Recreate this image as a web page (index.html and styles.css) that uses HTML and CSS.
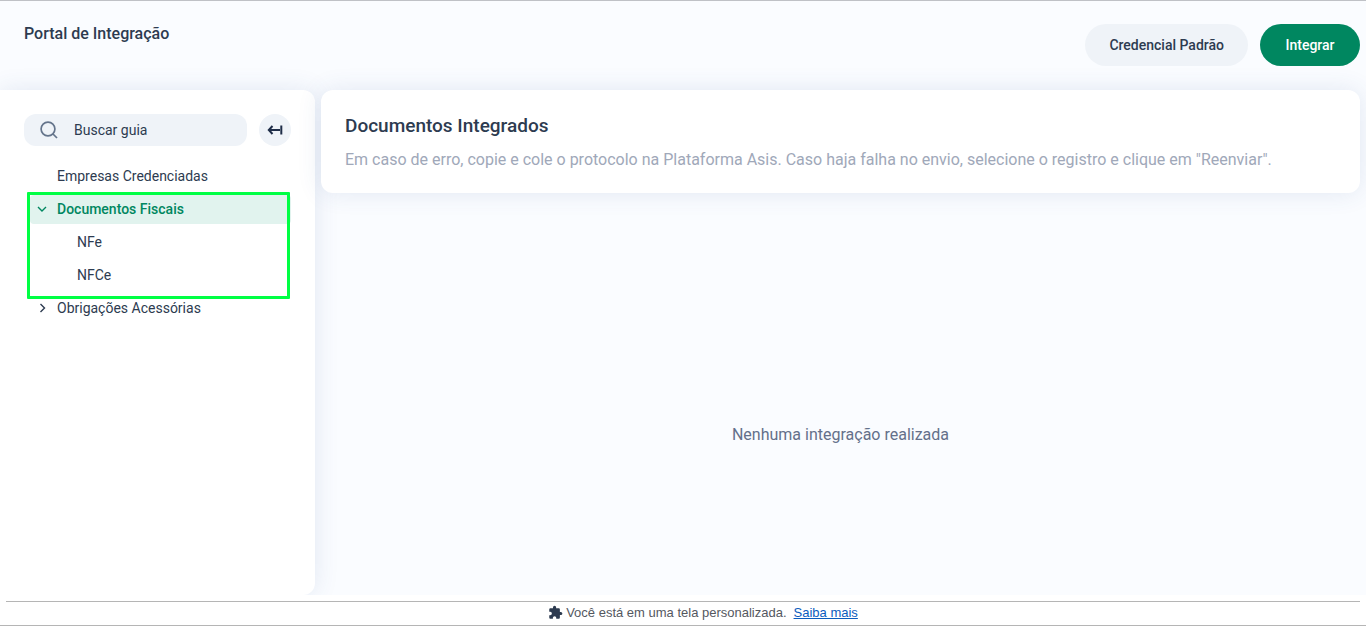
FILE: index.html
```html
<!DOCTYPE html>
<html lang="pt-BR">
<head>
    <meta charset="UTF-8">
    <title>Portal de Integração</title>
    <link rel="stylesheet" href="styles.css">
</head>
<body>
    <div class="portal">
        <header class="topbar">
            <h1>Portal de Integração</h1>
            <div class="actions">
                <button type="button" class="btn">Credencial Padrão</button>
                <button type="button" class="btn btn-primary">Integrar</button>
            </div>
        </header>

        <div class="content">
            <aside class="sidebar">
                <div class="search-row">
                    <label class="search">
                        <svg width="18" height="18" viewBox="0 0 18 18" fill="none" stroke="#64748b" stroke-width="1.7">
                            <circle cx="8" cy="8" r="6.9"/>
                            <path d="M13 13l4 4"/>
                        </svg>
                        <input type="text" placeholder="Buscar guia" aria-label="Buscar guia">
                    </label>
                    <button type="button" class="collapse" aria-label="Recolher menu">
                        <svg width="16" height="12" viewBox="0 0 16 12" fill="none" stroke="#1f2d48" stroke-width="2">
                            <path d="M5.500 2L1.800 6l3.700 4M2 6h11M14.300 1.500v9"/>
                        </svg>
                    </button>
                </div>

                <nav class="menu">
                    <a href="#">Empresas Credenciadas</a>
                    <div class="group">
                        <a href="#" class="active">
                            <svg class="chevron" width="10" height="10" viewBox="0 0 10 10" fill="none" stroke="currentColor" stroke-width="1.400"><path d="M1 3l4 4 4-4"/></svg>
                            Documentos Fiscais
                        </a>
                        <a href="#" class="sub">NFe</a>
                        <a href="#" class="sub">NFCe</a>
                    </div>
                    <a href="#">
                        <svg class="chevron" width="10" height="10" viewBox="0 0 10 10" fill="none" stroke="currentColor" stroke-width="1.400"><path d="M3.500 1l4 4-4 4"/></svg>
                        Obrigações Acessórias
                    </a>
                </nav>
            </aside>

            <main>
                <section class="card">
                    <h2>Documentos Integrados</h2>
                    <p>Em caso de erro, copie e cole o protocolo na Plataforma Asis. Caso haja falha no envio, selecione o registro e clique em "Reenviar".</p>
                </section>
                <div class="empty">Nenhuma integração realizada</div>
            </main>
        </div>
    </div>

    <footer>
        <div class="notice">
            <svg width="15" height="15" viewBox="0 0 24 24" fill="#2d3b50"><path d="M20.500 11H19V7c0-1.100-.9-2-2-2h-4V3.500a2.500 2.500 0 0 0-5 0V5H4c-1.100 0-2 .9-2 2v3.800h1.500a2.700 2.700 0 0 1 0 5.400H2V20c0 1.100.9 2 2 2h3.800v-1.500a2.700 2.700 0 0 1 5.400 0V22H17c1.100 0 2-.9 2-2v-4h1.500a2.500 2.500 0 0 0 0-5z"/></svg>
            <span>Você está em uma tela personalizada.</span>
            <a href="#">Saiba mais</a>
        </div>
    </footer>
</body>
</html>
```
FILE: styles.css
```css
* {
    box-sizing: border-box;
}

body {
    margin: 0;
    min-height: 100vh;
    display: flex;
    flex-direction: column;
    font-family: Roboto, Arial, sans-serif;
    font-size: 14px;
    color: #2d3b50;
    background: white;
    border-top: 1px solid #bfc1c6;
    border-bottom: 1px solid #b5b5b5;
}

.portal {
    flex: 1;
    display: flex;
    flex-direction: column;
    background: #fafcff;
}

.topbar {
    display: flex;
    justify-content: space-between;
    align-items: flex-start;
    padding: 23px 6px 24px 24px;
}

h1 {
    margin: 0;
    font-size: 16px;
    line-height: 20px;
    font-weight: 500;
}

.actions {
    display: flex;
    gap: 12px;
}

.btn {
    height: 42px;
    padding: 0 24px;
    border: none;
    border-radius: 21px;
    background: #eff3f8;
    color: #2d3b50;
    font-family: inherit;
    font-size: 14px;
    font-weight: 500;
    cursor: pointer;
}

.btn-primary {
    width: 100px;
    background: #008760;
    color: white;
}

.content {
    flex: 1;
    display: flex;
    gap: 6px;
}

.sidebar {
    width: 315px;
    padding: 24px 24px 0;
    background: white;
    border-radius: 0 12px 12px 0;
    box-shadow: 0 0 24px rgba(50, 80, 150, 0.12);
}

.search-row {
    display: flex;
    gap: 12px;
}

.search {
    flex: 1;
    display: flex;
    align-items: center;
    gap: 16px;
    height: 32px;
    padding: 0 16px;
    border-radius: 12px;
    background: #eff3f8;
}

.search svg {
    flex-shrink: 0;
}

.search input {
    width: 100%;
    padding: 0;
    border: none;
    outline: none;
    background: none;
    font-family: inherit;
    font-size: 14px;
}

.search input::placeholder {
    color: #2d3b50;
}

.collapse {
    display: flex;
    align-items: center;
    justify-content: center;
    width: 32px;
    height: 32px;
    padding: 0;
    border: none;
    border-radius: 50%;
    background: #eff3f8;
    cursor: pointer;
}

.menu {
    display: flex;
    flex-direction: column;
    gap: 4px;
    margin: 16px 0 0 6px;
}

.menu a {
    position: relative;
    padding-left: 27px;
    line-height: 29px;
    border-radius: 4px;
    color: #2d3b50;
    text-decoration: none;
}

.menu .sub {
    padding-left: 47px;
}

.menu .active {
    background: #e1f3ee;
    color: #008760;
    font-weight: 500;
}

.chevron {
    position: absolute;
    left: 7px;
    top: 9px;
}

.group {
    position: relative;
    display: flex;
    flex-direction: column;
    gap: 4px;
}

/* green frame over the open group */
.group::after {
    content: "";
    position: absolute;
    inset: -3px 1px -9px -3px;
    border: 3px solid #00ff44;
    border-radius: 1px;
    pointer-events: none;
}

main {
    flex: 1;
    display: flex;
    flex-direction: column;
    padding-right: 6px;
}

.card {
    padding: 24px 24px 22px;
    background: white;
    border-radius: 12px;
    box-shadow: 0 0 24px rgba(50, 80, 150, 0.12);
}

h2 {
    margin: 0 0 10px;
    font-size: 19px;
    line-height: 24px;
    font-weight: 500;
}

.card p {
    margin: 0;
    font-size: 16px;
    line-height: 23px;
    color: #a0a8b9;
}

.empty {
    flex: 1;
    display: flex;
    align-items: center;
    justify-content: center;
    padding-top: 80px;
    font-size: 16px;
    color: #64708a;
}

footer {
    padding: 6px 6px 0;
    background: white;
}

.notice {
    display: flex;
    align-items: center;
    justify-content: center;
    height: 24px;
    padding: 0 0 2px 40px;
    border-top: 1px solid #b5b5b5;
    font-family: "Liberation Sans", Arial, sans-serif;
    font-size: 13px;
    color: #54585f;
}

.notice span {
    margin: 0 7px 0 3px;
}

.notice a {
    color: #0b5cbe;
}
```
